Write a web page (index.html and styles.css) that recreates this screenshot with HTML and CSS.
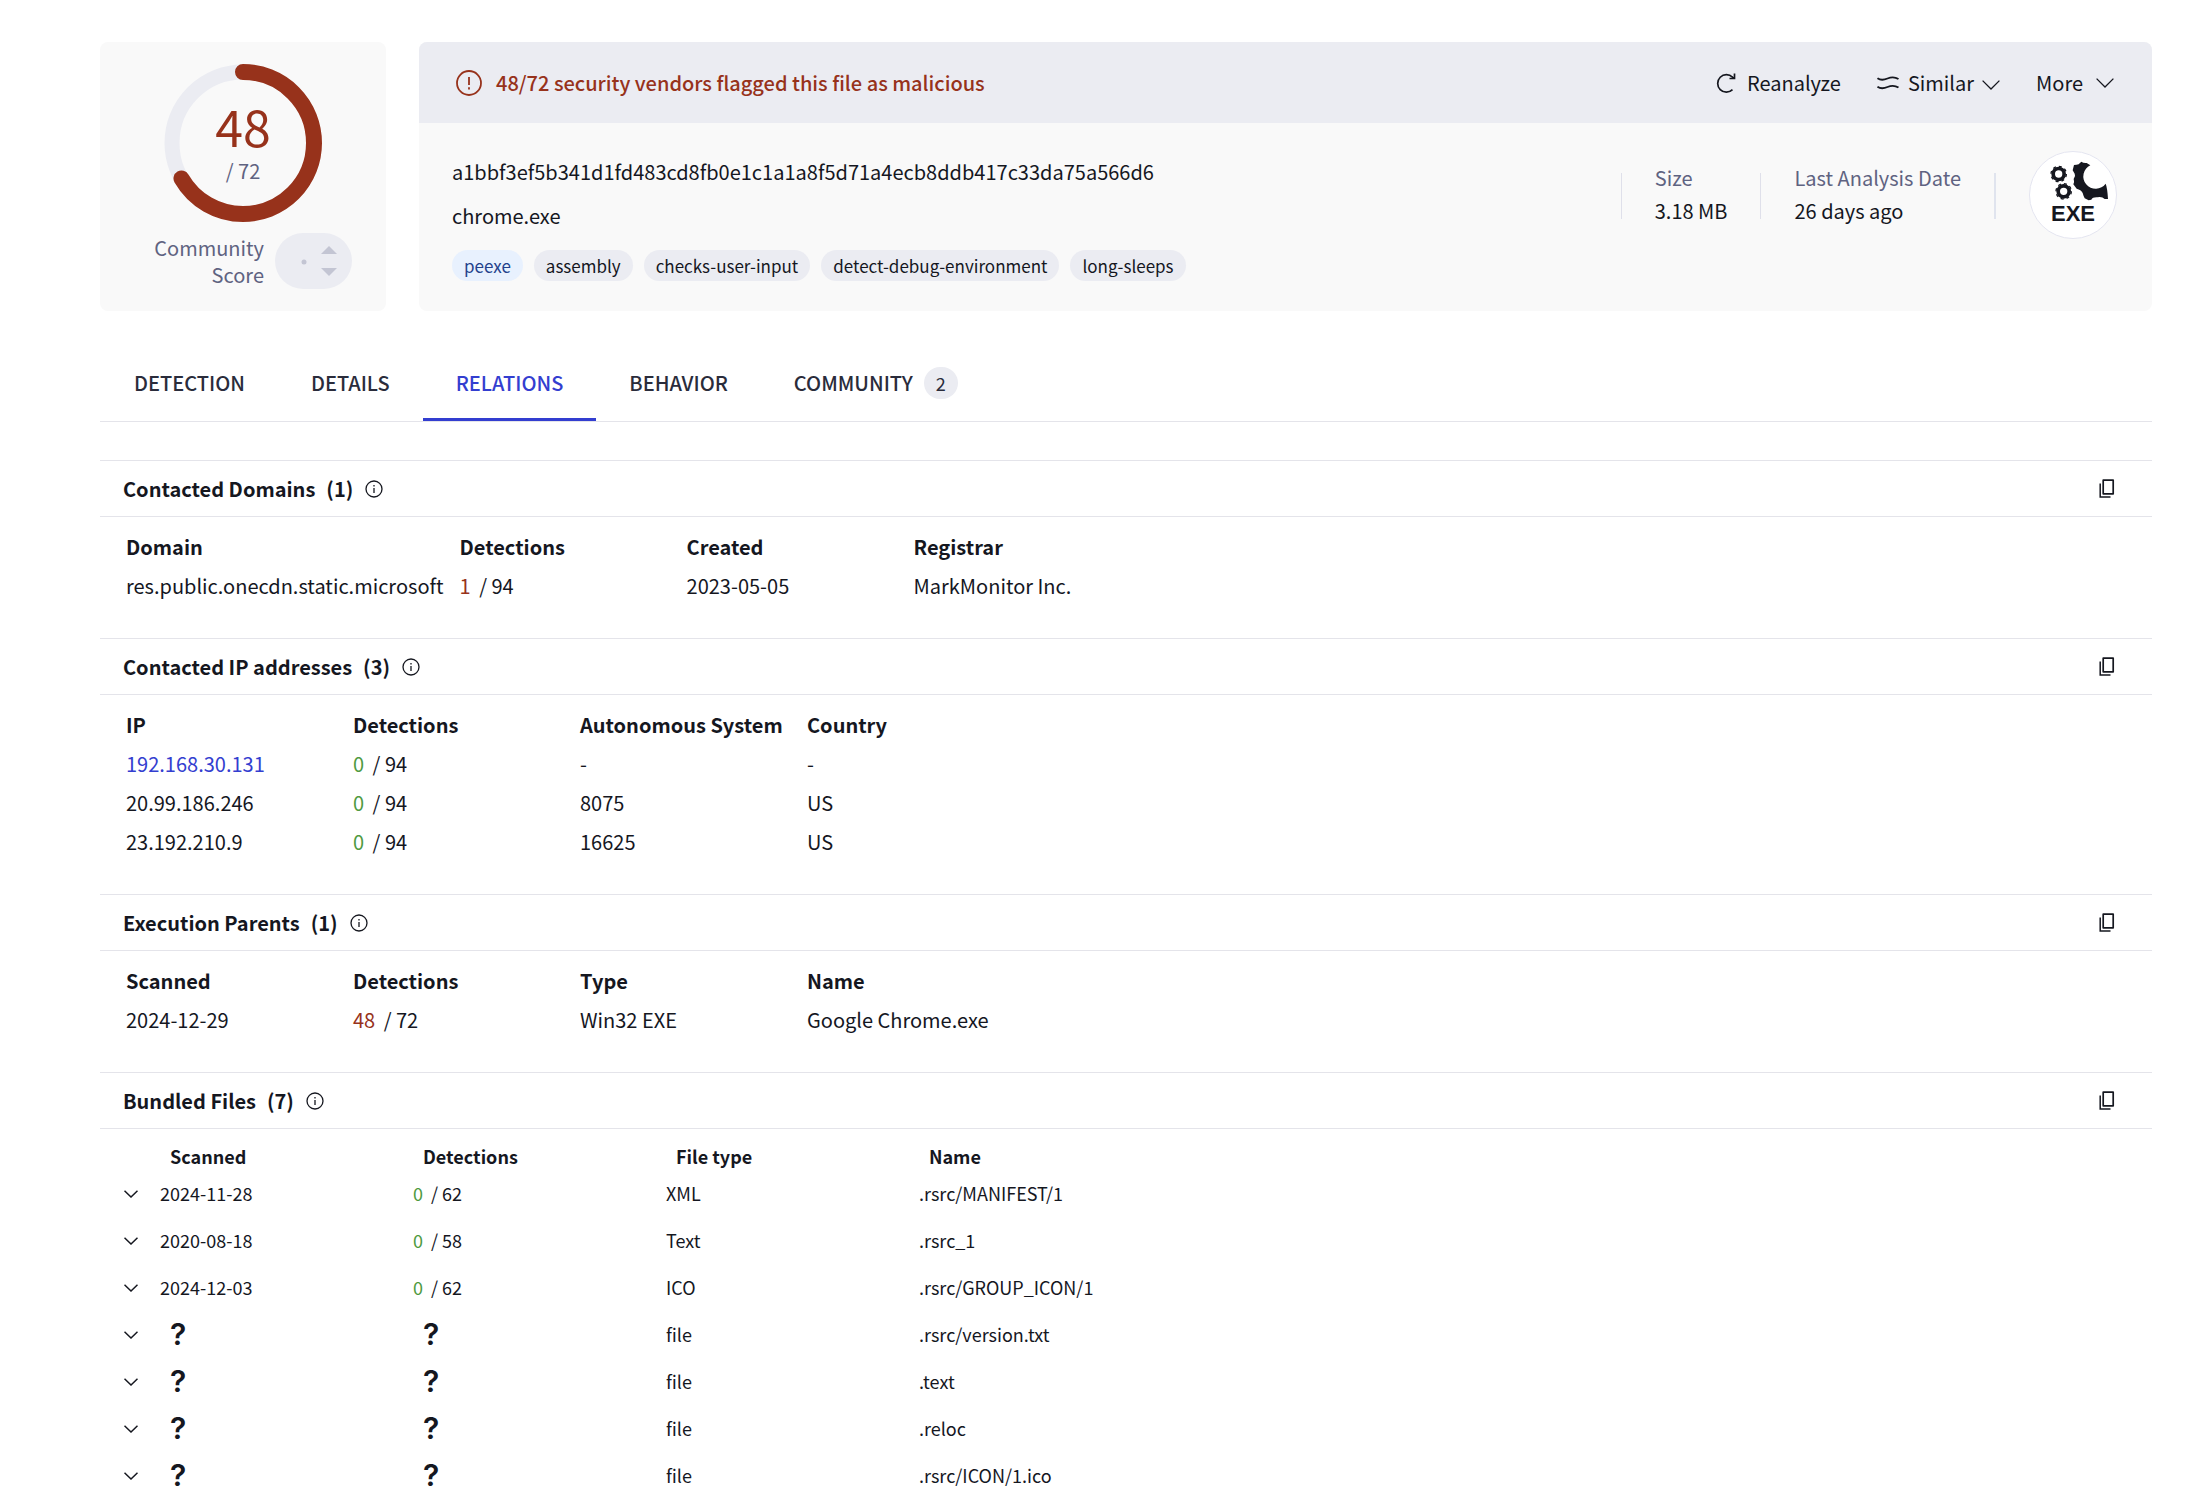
FILE: index.html
```html
<!DOCTYPE html>
<html lang="en">
<head>
<meta charset="utf-8">
<title>File report: chrome.exe</title>
<link rel="stylesheet" href="styles.css">
</head>
<body>
<svg class="defs" aria-hidden="true">
  <symbol id="info" viewBox="0 0 18 18"><circle cx="9" cy="9" r="8" fill="none" stroke="currentColor" stroke-width="1.3"/><path d="M9 8v5M9 5v1.6" stroke="currentColor" stroke-width="1.3"/></symbol>
  <symbol id="copy" viewBox="0 0 16 20"><path d="M4.2 1.2h10v13.6h-10z" fill="none" stroke="currentColor" stroke-width="1.7" stroke-linejoin="round"/><path d="M1.200 4.500v13.500h10.300" fill="none" stroke="currentColor" stroke-width="1.500"/></symbol>
  <symbol id="chevron" viewBox="0 0 18 10"><path d="M.6.6 9 9 17.400.6" fill="none" stroke="currentColor" stroke-width="1.3"/></symbol>
  <symbol id="chevron-small" viewBox="0 0 14 8"><path d="M.5.7 7 7 13.500.7" fill="none" stroke="currentColor" stroke-width="1.5"/></symbol>
</svg>
<main class="page">
  <section class="summary">
    <div class="card score">
      <div class="gauge">
        <svg class="ring" viewBox="0 0 158 158" aria-hidden="true">
          <circle cx="79" cy="79" r="71" fill="none" stroke="#ebecf2" stroke-width="15"/>
          <circle cx="79" cy="79" r="71" fill="none" stroke="#97321b" stroke-width="16" stroke-linecap="round" pathLength="72" stroke-dasharray="48 72" transform="rotate(-90 79 79)"/>
        </svg>
        <div class="gauge-text"><span class="positives">48</span><span class="total">/ 72</span></div>
      </div>
      <div class="community">
        <span class="community-label">Community<br>Score</span>
        <span class="votes">
          <svg viewBox="0 0 77 56" aria-hidden="true"><circle cx="29" cy="29" r="2.500" fill="#c3c5d3"/><path d="M46 21l8-8 8 8zM46 35l8 8 8-8z" fill="#c3c5d3"/></svg>
        </span>
      </div>
    </div>
    <div class="card report">
      <header class="bar">
        <svg class="alert" viewBox="0 0 26 26" aria-hidden="true"><circle cx="13" cy="13" r="12" fill="none" stroke="currentColor" stroke-width="1.8"/><path d="M13 7v8M13 17.200v2.200" stroke="currentColor" stroke-width="1.8"/></svg>
        <strong class="verdict">48/72 security vendors flagged this file as malicious</strong>
        <div class="actions">
          <button class="action reanalyze" type="button"><svg class="i-refresh" viewBox="0 0 20 20" aria-hidden="true"><path d="M16.500 16.600A8.700 8.700 0 1 1 16.500 4.200L18 5.200" fill="none" stroke="currentColor" stroke-width="1.700"/><path d="M18.500.6v4.900h-5" fill="none" stroke="currentColor" stroke-width="1.700"/></svg>Reanalyze</button>
          <button class="action similar" type="button"><svg class="i-waves" viewBox="0 0 22 14" aria-hidden="true"><path d="M.5 2.200c3.500 2.600 6.500 1.800 10 .3s7-2 11 .6M.5 10.700c3.500 2.600 6.500 1.800 10 .3s7-2 11 .6" fill="none" stroke="currentColor" stroke-width="1.8"/></svg>Similar<svg class="i-chevron low" aria-hidden="true"><use href="#chevron"/></svg></button>
          <button class="action more" type="button">More<svg class="i-chevron" aria-hidden="true"><use href="#chevron"/></svg></button>
        </div>
      </header>
      <div class="body">
        <div class="ident">
          <div class="hash">a1bbf3ef5b341d1fd483cd8fb0e1c1a1a8f5d71a4ecb8ddb417c33da75a566d6</div>
          <div class="name">chrome.exe</div>
          <div class="tags">
            <a class="tag kind" href="#">peexe</a><a class="tag" href="#">assembly</a><a class="tag" href="#">checks-user-input</a><a class="tag" href="#">detect-debug-environment</a><a class="tag" href="#">long-sleeps</a>
          </div>
        </div>
        <dl class="facts">
          <div class="fact"><dt>Size</dt><dd>3.18 MB</dd></div>
          <div class="fact last"><dt>Last Analysis Date</dt><dd>26 days ago</dd></div>
        </dl>
        <div class="filetype">
          <svg class="gears" viewBox="51 60 216 120" aria-hidden="true">
            <g fill="none" stroke="#15171f">
              <circle cx="116" cy="99" r="16.500" stroke-width="11"/><circle cx="116" cy="99" r="23" stroke-width="4" stroke-dasharray="9.030 9.030"/>
              <circle cx="131" cy="151" r="16.500" stroke-width="11"/><circle cx="131" cy="151" r="23" stroke-width="4" stroke-dasharray="9.030 9.030"/>
            </g>
            <path fill="#15171f" d="M184 62Q190 67 200 66L211 73A37 37 0 1 0 257 128Q262 140 264 174L254 174Q246 166 232 169Q218 168 214 176L206 178L194 172Q190 164 188 156Q183 146 170 143L160 130Q164 122 161 114Q168 106 164 98L158 88L162 72Q170 72 176 70Z"/>
          </svg>
          <span class="ext">EXE</span>
        </div>
      </div>
    </div>
  </section>

  <nav class="tabs">
    <a class="tab" href="#">DETECTION</a><a class="tab" href="#">DETAILS</a><a class="tab active" href="#" aria-current="page">RELATIONS</a><a class="tab" href="#">BEHAVIOR</a><a class="tab" href="#">COMMUNITY<span class="badge">2</span></a>
  </nav>

  <section class="relation">
    <header class="rel-head"><h2>Contacted Domains</h2><span class="count">(1)</span><svg class="i-info" aria-hidden="true"><use href="#info"/></svg><button class="copy" type="button" aria-label="Copy domains"><svg class="i-copy"><use href="#copy"/></svg></button></header>
    <table class="grid">
      <thead><tr><th>Domain</th><th>Detections</th><th>Created</th><th>Registrar</th></tr></thead>
      <tbody><tr><td>res.public.onecdn.static.microsoft</td><td><span class="bad">1</span> / 94</td><td>2023-05-05</td><td>MarkMonitor Inc.</td></tr></tbody>
    </table>
  </section>

  <section class="relation">
    <header class="rel-head"><h2>Contacted IP addresses</h2><span class="count">(3)</span><svg class="i-info" aria-hidden="true"><use href="#info"/></svg><button class="copy" type="button" aria-label="Copy IP addresses"><svg class="i-copy"><use href="#copy"/></svg></button></header>
    <table class="grid">
      <thead><tr><th>IP</th><th>Detections</th><th>Autonomous System</th><th>Country</th></tr></thead>
      <tbody>
        <tr><td><a class="link" href="#">192.168.30.131</a></td><td><span class="good">0</span> / 94</td><td>-</td><td>-</td></tr>
        <tr><td>20.99.186.246</td><td><span class="good">0</span> / 94</td><td>8075</td><td>US</td></tr>
        <tr><td>23.192.210.9</td><td><span class="good">0</span> / 94</td><td>16625</td><td>US</td></tr>
      </tbody>
    </table>
  </section>

  <section class="relation">
    <header class="rel-head"><h2>Execution Parents</h2><span class="count">(1)</span><svg class="i-info" aria-hidden="true"><use href="#info"/></svg><button class="copy" type="button" aria-label="Copy execution parents"><svg class="i-copy"><use href="#copy"/></svg></button></header>
    <table class="grid">
      <thead><tr><th>Scanned</th><th>Detections</th><th>Type</th><th>Name</th></tr></thead>
      <tbody><tr><td>2024-12-29</td><td><span class="bad">48</span> / 72</td><td>Win32 EXE</td><td>Google Chrome.exe</td></tr></tbody>
    </table>
  </section>

  <section class="relation">
    <header class="rel-head"><h2>Bundled Files</h2><span class="count">(7)</span><svg class="i-info" aria-hidden="true"><use href="#info"/></svg><button class="copy" type="button" aria-label="Copy bundled files"><svg class="i-copy"><use href="#copy"/></svg></button></header>
    <table class="files">
      <thead><tr><td class="toggle"></td><th>Scanned</th><th>Detections</th><th>File type</th><th>Name</th></tr></thead>
      <tbody>
        <tr><td class="toggle"><button class="expand" type="button" aria-label="Expand"><svg><use href="#chevron-small"/></svg></button></td><td>2024-11-28</td><td><span class="good">0</span> / 62</td><td>XML</td><td>.rsrc/MANIFEST/1</td></tr>
        <tr><td class="toggle"><button class="expand" type="button" aria-label="Expand"><svg><use href="#chevron-small"/></svg></button></td><td>2020-08-18</td><td><span class="good">0</span> / 58</td><td>Text</td><td>.rsrc_1</td></tr>
        <tr><td class="toggle"><button class="expand" type="button" aria-label="Expand"><svg><use href="#chevron-small"/></svg></button></td><td>2024-12-03</td><td><span class="good">0</span> / 62</td><td>ICO</td><td>.rsrc/GROUP_ICON/1</td></tr>
        <tr><td class="toggle"><button class="expand" type="button" aria-label="Expand"><svg><use href="#chevron-small"/></svg></button></td><td class="unknown">?</td><td class="unknown">?</td><td>file</td><td>.rsrc/version.txt</td></tr>
        <tr><td class="toggle"><button class="expand" type="button" aria-label="Expand"><svg><use href="#chevron-small"/></svg></button></td><td class="unknown">?</td><td class="unknown">?</td><td>file</td><td>.text</td></tr>
        <tr><td class="toggle"><button class="expand" type="button" aria-label="Expand"><svg><use href="#chevron-small"/></svg></button></td><td class="unknown">?</td><td class="unknown">?</td><td>file</td><td>.reloc</td></tr>
        <tr><td class="toggle"><button class="expand" type="button" aria-label="Expand"><svg><use href="#chevron-small"/></svg></button></td><td class="unknown">?</td><td class="unknown">?</td><td>file</td><td>.rsrc/ICON/1.ico</td></tr>
      </tbody>
    </table>
  </section>
</main>
</body>
</html>
```
FILE: styles.css
```css
* { box-sizing: border-box; }
body {
  margin: 0;
  background: #fff;
  color: #15171f;
  font-family: "Noto Sans CJK SC", "Noto Sans", sans-serif;
  font-size: 20px;
  line-height: 28px;
}
.defs { display: none; }
svg { display: block; flex: none; }
a { color: inherit; text-decoration: none; }
button { margin: 0; padding: 0; border: 0; background: none; color: inherit; font: inherit; cursor: pointer; }
.page { padding: 42px 56px 0 100px; }

.summary { display: flex; gap: 33px; }
.card { border-radius: 8px; background: #f9f9f9; overflow: hidden; }
.score { flex: none; width: 286px; padding: 22px 34px 21px 54px; }
.gauge { display: grid; width: 158px; margin-left: 10px; }
.ring, .gauge-text { grid-area: 1 / 1; }
.ring { width: 158px; height: 158px; }
.gauge-text { display: flex; flex-direction: column; align-items: center; justify-content: center; gap: 8px; }
.positives { color: #97321b; font-size: 50px; line-height: 48px; }
.total { color: #5f6381; line-height: 28px; }
.community { display: flex; align-items: center; justify-content: flex-end; gap: 11px; margin-top: 11px; color: #5f6381; text-align: right; line-height: 27px; }
.votes { width: 77px; height: 56px; border-radius: 28px; background: #ebecf2; }

.report { flex: 1; min-width: 0; }
.bar { display: flex; align-items: center; height: 81px; padding: 0 38px 0 37px; background: #ebecf2; }
.alert { width: 26px; height: 26px; margin-right: 14px; color: #97321b; }
.verdict { color: #97321b; font-weight: 500; }
.actions { display: flex; gap: 36px; margin-left: auto; }
.action { display: flex; align-items: center; }
.i-refresh { width: 20px; height: 20px; margin-right: 11px; }
.i-waves { width: 22px; height: 14px; margin-right: 9px; }
.i-chevron { width: 18px; height: 10px; margin-left: 13px; }
.i-chevron.low { margin: 4px 0 0 8px; }
.body { display: flex; padding: 27px 35px 30px 33px; }
.ident { flex: 1; min-width: 0; }
.hash, .name { height: 44px; line-height: 44px; }
.tags { display: flex; gap: 11px; margin-top: 12px; }
.tag { padding: 0 12px; border-radius: 16px; background: #ebecf2; font-size: 17px; line-height: 31px; }
.tag.kind { background: #e8f1fe; color: #24418c; }
.facts { display: flex; height: 46px; margin: 23px 0 0; align-items: center; }
.fact { height: 46px; padding: 0 33px 4px; border-left: 1px solid #dfe0ea; display: flex; flex-direction: column; justify-content: center; line-height: 33px; }
.fact.last { border-right: 2px solid #e0e4ee; }
.fact dt { color: #5f6381; }
.fact dd { margin: 0; }
.filetype { display: flex; flex-direction: column; align-items: center; width: 88px; height: 88px; margin: 1px 0 0 33px; padding-top: 9px; border: 1px solid #e4e5f0; border-radius: 50%; background: #fff; }
.gears { width: 72px; height: 40px; }
.ext { font: bold 22px/26px "Liberation Sans", Arial, sans-serif; }

.tabs { display: flex; height: 77px; margin-top: 34px; padding-left: 1px; border-bottom: 1px solid #e4e4ea; }
.tab { display: flex; align-items: center; height: 76px; padding: 3px 33px 0; border-bottom: 3px solid transparent; color: #2a2c3b; font-weight: 500; }
.tab.active { border-bottom-color: #333ed0; color: #333ed0; }
.badge { min-width: 34px; margin-left: 11px; border-radius: 16px; background: #ebecf2; font-size: 18px; font-weight: 400; line-height: 32px; text-align: center; }

.relation { padding-bottom: 33px; border-top: 1px solid #e4e4ea; }
.tabs + .relation { margin-top: 38px; }
.rel-head { display: flex; align-items: center; height: 56px; padding: 0 37px 0 23px; border-bottom: 1px solid #e4e4ea; font-weight: 700; }
.rel-head h2 { margin: 0; font: inherit; }
.count { margin-left: 11px; }
.i-info { width: 18px; height: 18px; margin-left: 12px; }
.copy { margin-left: auto; }
.i-copy { width: 16px; height: 20px; }

table { border-collapse: collapse; white-space: nowrap; }
th, td { padding: 0; text-align: left; }
.grid { margin: 10px 0 0 26px; }
.grid th, .grid td { width: 227px; height: 39px; padding-right: 16px; }
.bad { margin-right: 4px; color: #97321b; }
.good { margin-right: 4px; color: #4f9a41; }
.link { color: #333ed0; }

.files { margin: 8px 0 0 23px; font-size: 18px; }
.files th { width: 253px; height: 37px; padding-left: 10px; }
.files td { height: 47px; }
.files thead td { height: 37px; }
.files tbody td { padding-bottom: 10px; }
.files tbody .toggle { width: 37px; padding: 2px 0 10px 1px; }
.expand { display: block; }
.expand svg { width: 14px; height: 8px; }
.files .unknown { padding-left: 10px; font: 600 30px/28px Inter, sans-serif; }
```
